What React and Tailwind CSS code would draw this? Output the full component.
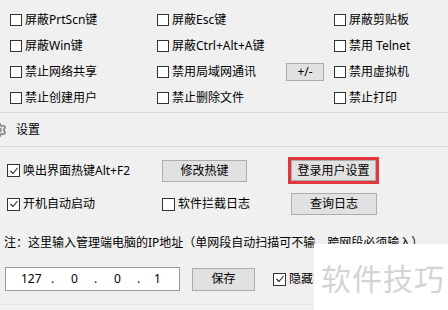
import React from "react";
import { Settings } from "lucide-react";

const font = { fontFamily: '"Noto Sans", "Noto Sans CJK SC", sans-serif' };

const Box = ({ checked, size = "w-[12px] h-[12px]" }) => (
  <span className={`${size} shrink-0 border border-[#333] bg-white flex items-center justify-center`}>
    {checked && (
      <svg width="10" height="10" viewBox="0 0 10 10">
        <polyline points="1.5,5 4,7.5 8.5,2" fill="none" stroke="#222" strokeWidth="1.1" />
      </svg>
    )}
  </span>
);

const Check = ({ label, checked, big }) => (
  <label className="flex items-center gap-[3px] text-[12px] text-black leading-none whitespace-nowrap">
    <Box checked={checked} size={big ? "w-[13px] h-[13px]" : "w-[12px] h-[12px]"} />
    <span>{label}</span>
  </label>
);

const Btn = ({ children, className = "" }) => (
  <button className={`bg-[#e1e1e1] border border-[#adadad] text-[12px] text-black leading-none flex items-center justify-center ${className}`}>
    {children}
  </button>
);

const rows = [
  ["屏蔽PrtScn键", "屏蔽Esc键", null, "屏蔽剪贴板"],
  ["屏蔽Win键", "屏蔽Ctrl+Alt+A键", null, "禁用 Telnet"],
  ["禁止网络共享", "禁用局域网通讯", "+/-", "禁用虚拟机"],
  ["禁止创建用户", "禁止删除文件", null, "禁止打印"],
];

export default function App() {
  return (
    <div className="relative w-[448px] h-[310px] overflow-hidden bg-[#f0f0f0]" style={font}>
      {/* top options */}
      <div className="h-[112px] pt-[7px] pl-[10px]">
        {rows.map((r, i) => (
          <div key={i} className="grid grid-cols-[147px_129px_48px_auto] h-[26px] items-center">
            <Check label={r[0]} />
            <Check label={r[1]} />
            <div>{r[2] && <Btn className="w-[38px] h-[18px]">{r[2]}</Btn>}</div>
            <Check label={r[3]} />
          </div>
        ))}
      </div>
      <div className="border-t border-[#d9d9d9]" />

      {/* settings header */}
      <div className="h-[33px] flex items-center">
        <Settings size={16} className="ml-[-9px] text-[#8a8a8a]" strokeWidth={2.5} />
        <span className="ml-[9px] text-[12px] text-black">设置</span>
      </div>
      <div className="border-t border-[#d9d9d9]" />

      {/* settings rows */}
      <div className="mt-[10px] h-[27px] flex items-center pl-[7px]">
        <div className="w-[155px]">
          <Check label="唤出界面热键Alt+F2" checked big />
        </div>
        <Btn className="w-[85px] h-[22px]">修改热键</Btn>
        <div className="ml-[41px] w-[91px] h-[27px] border-[3px] border-[#e2373d] flex">
          <Btn className="flex-1">登录用户设置</Btn>
        </div>
      </div>
      <div className="mt-[9px] h-[22px] flex items-center pl-[7px]">
        <div className="w-[155px]">
          <Check label="开机自动启动" checked big />
        </div>
        <div className="w-[129px]">
          <Check label="软件拦截日志" big />
        </div>
        <Btn className="w-[86px] h-[22px]">查询日志</Btn>
      </div>

      {/* note */}
      <div className="mt-[19px] h-[18px] flex items-center pl-[4px] text-[12px] text-black whitespace-nowrap">
        注：这里输入管理端电脑的IP地址（单网段自动扫描可不输，跨网段必须输入）
      </div>

      {/* ip row */}
      <div className="mt-[15px] h-[24px] flex items-center pl-[5px]">
        <div className="w-[175px] h-[24px] bg-white border border-[#9a9a9a] flex items-center text-[12px] text-black">
          <span className="w-[45px] pl-[15px]">127</span>
          <span className="w-[20px]">.</span>
          <span className="w-[23px]">0</span>
          <span className="w-[20px]">.</span>
          <span className="w-[23px]">0</span>
          <span className="w-[17px]">.</span>
          <span>1</span>
        </div>
        <Btn className="ml-[12px] w-[63px] h-[23px]">保存</Btn>
        <div className="ml-[18px] w-[41px] overflow-hidden">
          <Check label="隐藏客户端图标" checked big />
        </div>
      </div>
      <div className="mt-[13px] border-t border-[#e2e2e2]" />

      {/* watermark */}
      <div className="absolute left-[314px] top-[244px] w-[134px] h-[66px] bg-white flex items-center pl-[7px]">
        <span className="text-[30px] leading-none text-[#d4d4d4] tracking-[1px]" style={{ fontFamily: '"Noto Sans CJK SC", sans-serif' }}>软件技巧</span>
      </div>
    </div>
  );
}
